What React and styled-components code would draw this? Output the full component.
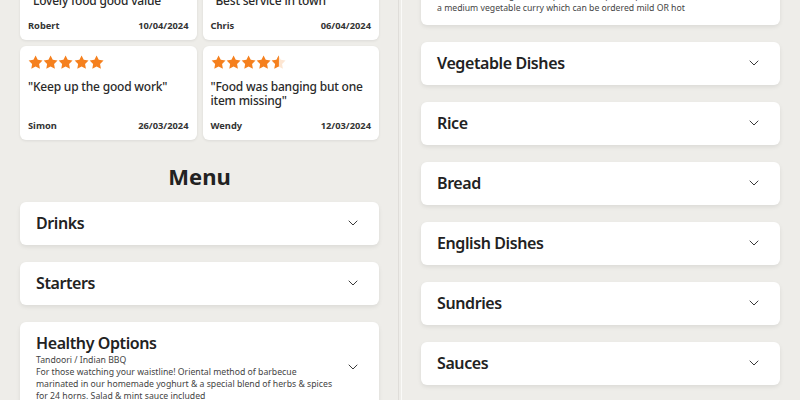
import React from "react";
import styled, { createGlobalStyle } from "styled-components";

const GlobalStyle = createGlobalStyle`
  html, body {
    margin: 0;
    padding: 0;
    background: #eeede9;
    font-family: "Noto Sans", "Open Sans", sans-serif;
    color: #222;
  }
`;

const reviewsTop = [
  { stars: 5, quote: "\"Lovely food good value\"", name: "Robert", date: "10/04/2024" },
  { stars: 5, quote: "\"Best service in town\"", name: "Chris", date: "06/04/2024" },
];

const reviewsBottom = [
  { stars: 5, quote: "\"Keep up the good work\"", name: "Simon", date: "26/03/2024" },
  {
    stars: 4.5,
    quote: "\"Food was banging but one item missing\"",
    name: "Wendy",
    date: "12/03/2024",
  },
];

const leftMenu = [
  { title: "Drinks" },
  { title: "Starters" },
  {
    title: "Healthy Options",
    sub: "Tandoori / Indian BBQ",
    lines: [
      "For those watching your waistline! Oriental method of barbecue",
      "marinated in our homemade yoghurt & a special blend of herbs & spices",
      "for 24 horns. Salad & mint sauce included",
    ],
  },
];

const rightMenu = [
  {
    title: "Vegetarian Specials",
    sub: "Chef's choice",
    lines: [
      "Fresh seasonal vegetables, spinach, chickpeas & potatoes cooked in",
      "a medium vegetable curry which can be ordered mild OR hot",
    ],
  },
  { title: "Vegetable Dishes" },
  { title: "Rice" },
  { title: "Bread" },
  { title: "English Dishes" },
  { title: "Sundries" },
  { title: "Sauces" },
];

// chunky five point star
const STAR =
  "M12 0.8l3.4 6.9 7.6 1.1-5.5 5.3 1.3 7.6L12 18.1l-6.8 3.6 1.3-7.6L1 8.8l7.6-1.1z";

const Star = ({ fill }) => (
  <svg width="15.2" height="15.2" viewBox="0 0 24 24">
    <defs>
      <clipPath id="half">
        <rect x="0" y="0" width="12.5" height="24" />
      </clipPath>
    </defs>
    {fill === "half" ? (
      <>
        <path d={STAR} fill="#fde6d2" />
        <path d={STAR} fill="#f5801e" clipPath="url(#half)" />
      </>
    ) : (
      <path d={STAR} fill="#f5801e" />
    )}
  </svg>
);

const Chevron = () => (
  <svg width="10" height="6" viewBox="0 0 10 6">
    <polyline
      points="1,1 5,5 9,1"
      fill="none"
      stroke="#3a3a3a"
      strokeWidth="1"
      strokeLinecap="round"
      strokeLinejoin="round"
    />
  </svg>
);

const ReviewCard = ({ review }) => {
  const stars = [];
  for (let i = 1; i <= 5; i++) {
    if (review.stars >= i) stars.push(<Star key={i} />);
    else if (review.stars > i - 1) stars.push(<Star key={i} fill="half" />);
  }
  return (
    <ReviewBox>
      <StarRow>{stars}</StarRow>
      <Quote>{review.quote}</Quote>
      <ReviewFooter>
        <span>{review.name}</span>
        <span>{review.date}</span>
      </ReviewFooter>
    </ReviewBox>
  );
};

const MenuCard = ({ item }) => (
  <CardBox>
    <CardText>
      <CardTitle>{item.title}</CardTitle>
      {item.sub && <CardSub>{item.sub}</CardSub>}
      {item.lines &&
        item.lines.map((line, i) => <CardLine key={i}>{line}</CardLine>)}
    </CardText>
    <Chevron />
  </CardBox>
);

const App = () => {
  return (
    <>
      <GlobalStyle />
      <Page>
        <Pane $padLeft={20} $padRight={19}>
          <Scroll $offset={40}>
            <ReviewGrid>
              {reviewsTop.map((r) => (
                <ReviewCard key={r.name} review={r} />
              ))}
            </ReviewGrid>
            <ReviewGrid>
              {reviewsBottom.map((r) => (
                <ReviewCard key={r.name} review={r} />
              ))}
            </ReviewGrid>
            <Heading>Menu</Heading>
            <CardList>
              {leftMenu.map((m) => (
                <MenuCard key={m.title} item={m} />
              ))}
            </CardList>
          </Scroll>
        </Pane>
        <Divider />
        <Pane $padLeft={19} $padRight={20}>
          <Scroll $offset={54}>
            <CardList>
              {rightMenu.map((m) => (
                <MenuCard key={m.title} item={m} />
              ))}
            </CardList>
          </Scroll>
        </Pane>
      </Page>
    </>
  );
};

const Page = styled.div`
  display: grid;
  grid-template-columns: 398px 4px 398px;
  width: 800px;
  height: 400px;
  overflow: hidden;
`;

const Pane = styled.div`
  overflow: hidden;
  padding: 0 ${(p) => p.$padRight}px 0 ${(p) => p.$padLeft}px;
`;

const Divider = styled.div`
  background: #eeede9;
  border-left: 1px solid #dfddd9;
  border-right: 1px solid #fafaf8;
  box-sizing: border-box;
`;

const Scroll = styled.div`
  display: flex;
  flex-direction: column;
  margin-top: ${(p) => -p.$offset}px;
`;

const ReviewGrid = styled.div`
  display: grid;
  grid-template-columns: 1fr 1fr;
  gap: 6px;
  margin-bottom: 6px;
`;

const ReviewBox = styled.div`
  background: #fff;
  border-radius: 6px;
  box-shadow: 0 1px 3px rgba(0, 0, 0, 0.08);
  padding: 8px;
  display: flex;
  flex-direction: column;
`;

const StarRow = styled.div`
  display: flex;
  margin-top: 1px;
  height: 16px;
  align-items: center;
`;

const Quote = styled.div`
  font-size: 12px;
  font-weight: 500;
  letter-spacing: -0.2px;
  line-height: 14px;
  margin: 9px 0 12px;
  color: #2a2a2a;
`;

const ReviewFooter = styled.div`
  margin-top: auto;
  display: flex;
  justify-content: space-between;
  font-size: 9.3px;
  font-weight: 700;
  line-height: 12px;
  color: #333;
`;

const Heading = styled.h2`
  margin: 16px 0 12px;
  text-align: center;
  font-size: 22px;
  line-height: 28px;
  font-weight: 700;
  color: #222;
`;

const CardList = styled.div`
  display: flex;
  flex-direction: column;
  gap: 17px;
`;

const CardBox = styled.div`
  background: #fff;
  border-radius: 6px;
  box-shadow: 0 2px 4px rgba(0, 0, 0, 0.08);
  display: flex;
  align-items: center;
  padding: 10px 21px 11px 16px;
`;

const CardText = styled.div`
  flex: 1;
  min-width: 0;
`;

const CardTitle = styled.div`
  font-size: 16px;
  font-weight: 600;
  letter-spacing: -0.4px;
  line-height: 22px;
  color: #222;
`;

const CardSub = styled.div`
  font-size: 8.7px;
  line-height: 12px;
  color: #444;
`;

const CardLine = styled.div`
  font-size: 8.7px;
  line-height: 12px;
  color: #444;
  white-space: nowrap;
`;

export default App;
